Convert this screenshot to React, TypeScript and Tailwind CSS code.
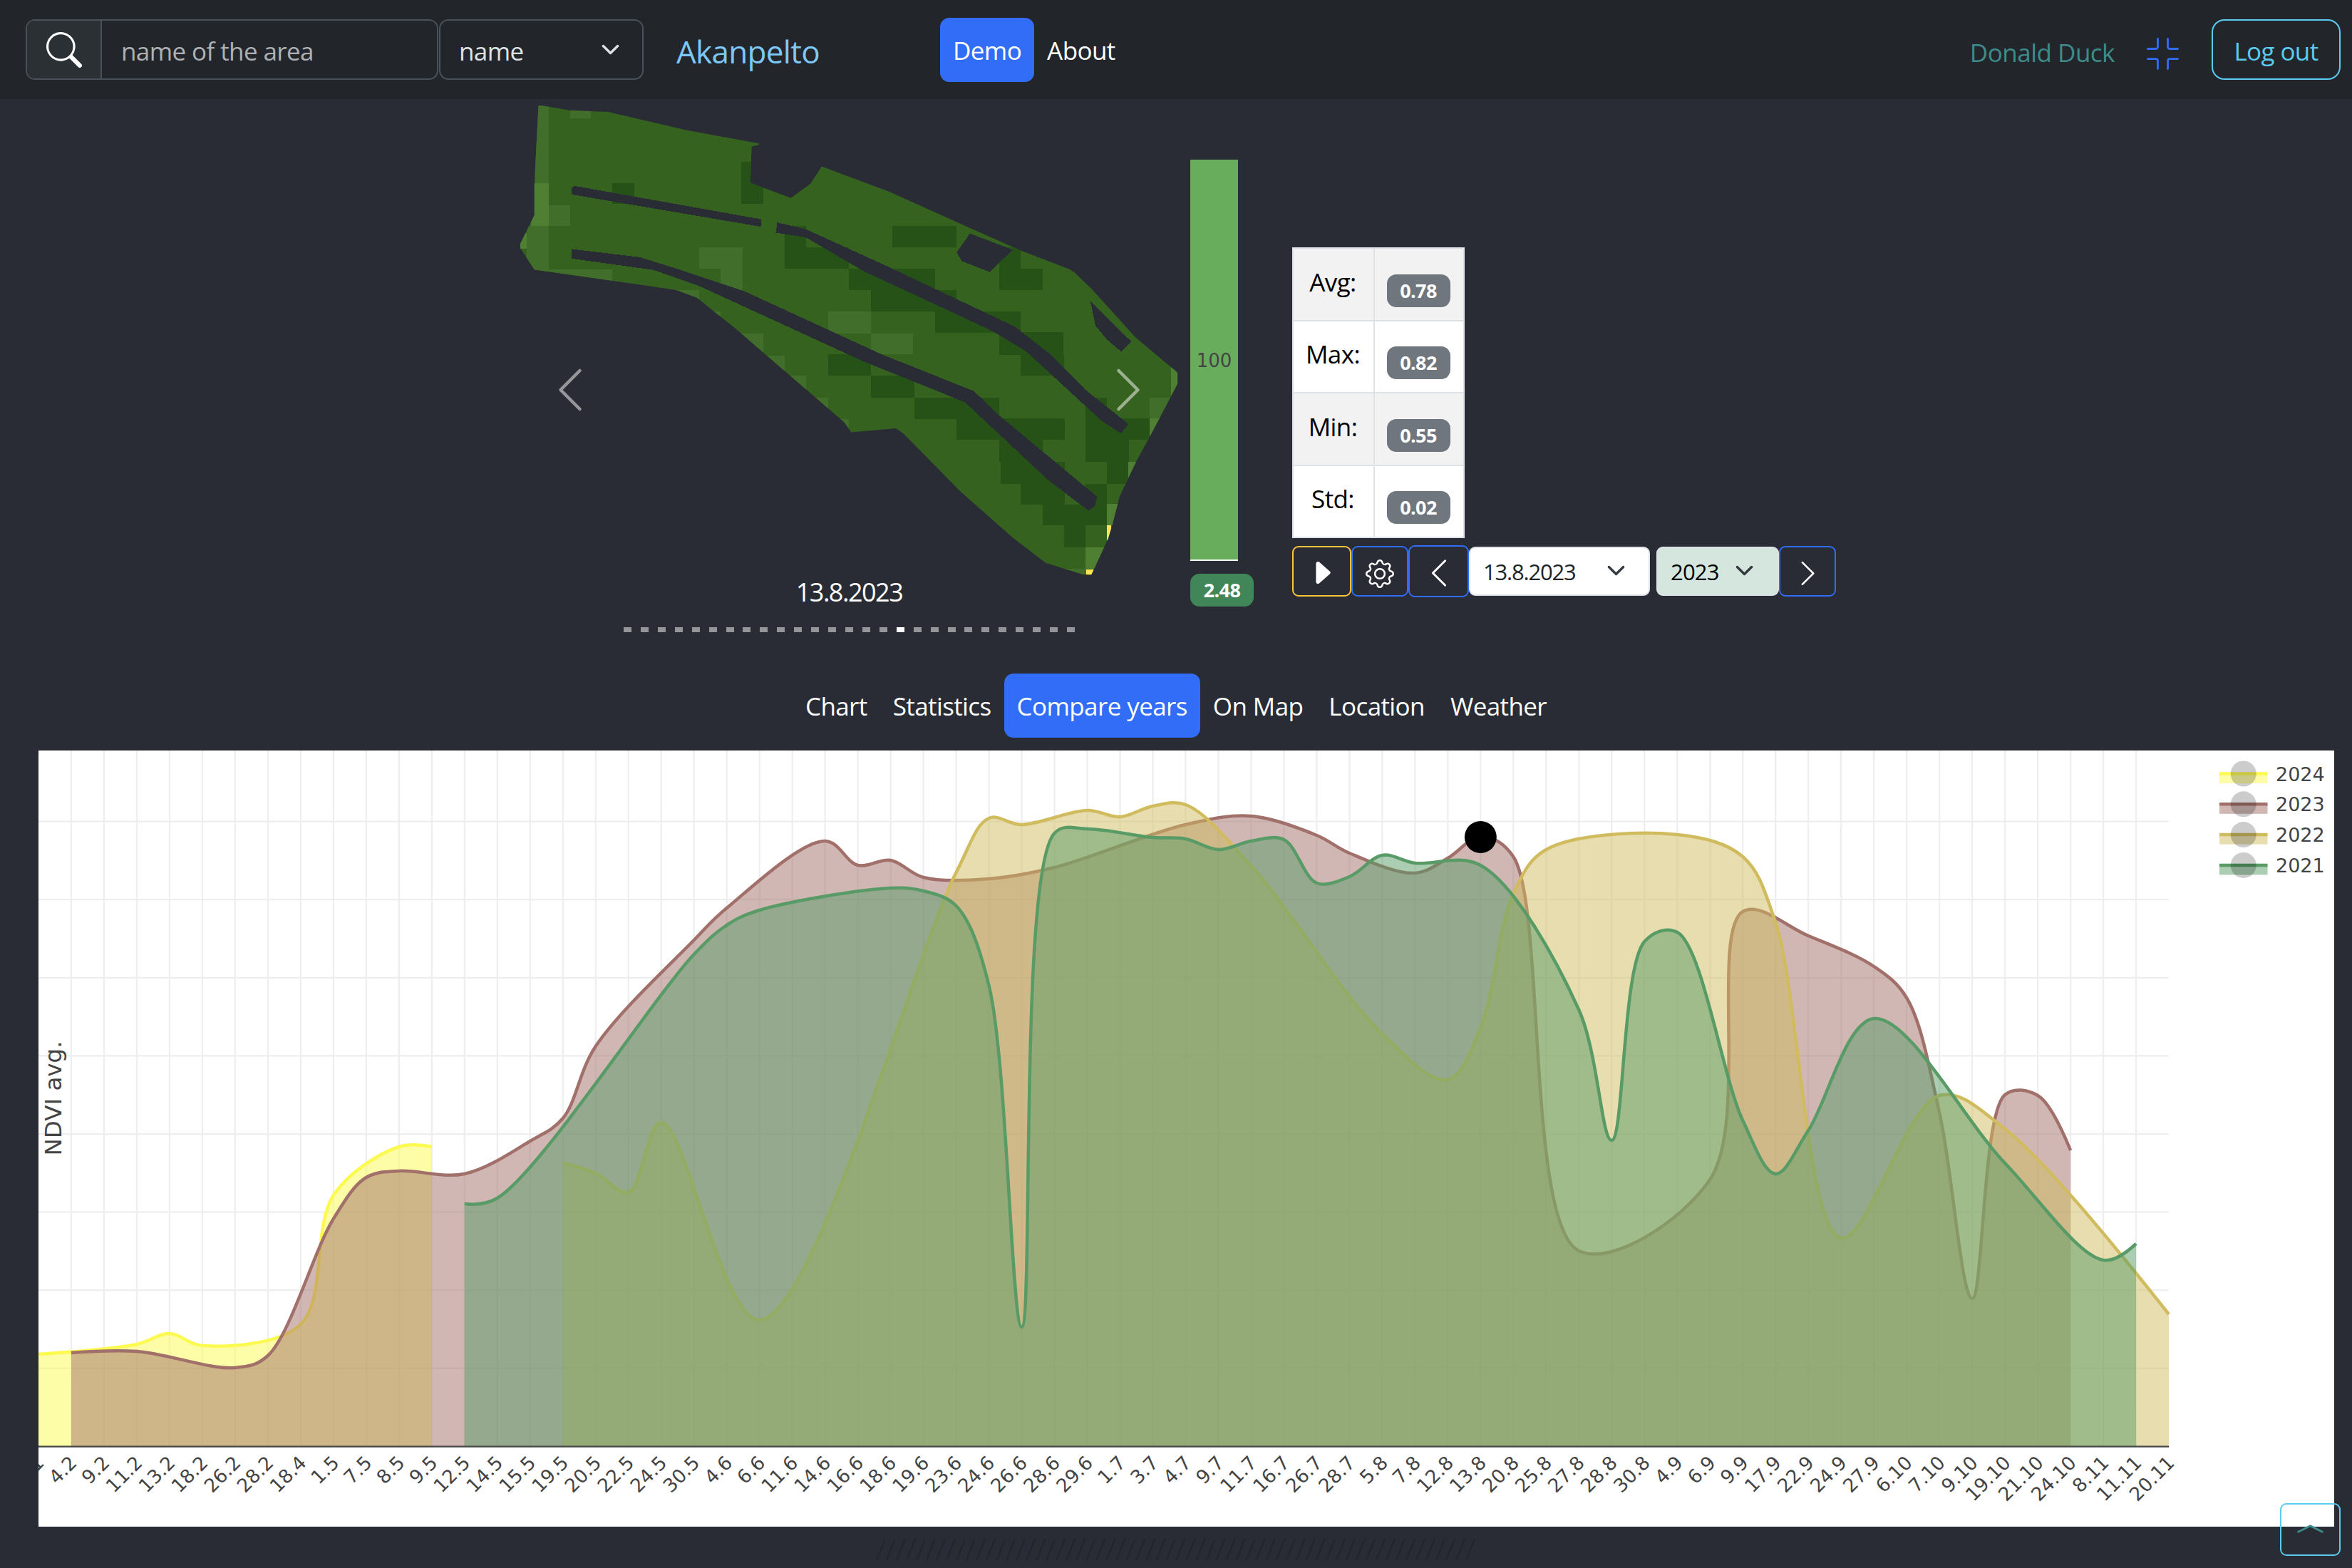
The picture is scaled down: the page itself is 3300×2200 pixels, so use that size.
import React from 'react';
import {
  BsCaretRightFill,
  BsChevronCompactUp,
  BsChevronLeft,
  BsChevronRight,
  BsFullscreenExit,
  BsGear,
  BsSearch,
} from 'react-icons/bs';

/* ---------- shared bits ---------- */

function Caret({ className = '' }: { className?: string }) {
  return (
    <svg viewBox="0 0 16 16" className={`size-[27px] ${className}`} fill="none">
      <path d="m2 5 6 6 6-6" stroke="currentColor" strokeWidth="2" strokeLinecap="round" strokeLinejoin="round" />
    </svg>
  );
}

function Tab({ label, active = false }: { label: string; active?: boolean }) {
  return (
    <a
      className={`flex h-[90px] items-center rounded-[13px] px-[18px] pt-[2px] text-white ${active ? 'bg-[#316df6]' : ''}`}
    >
      {label}
    </a>
  );
}

/* ---------- header ---------- */

function Header() {
  return (
    <header className="flex h-[139px] items-start bg-[#22262b] pl-[36px] pr-[16px]">
      <div className="mt-[27px] flex h-[85px] w-[579px] overflow-hidden rounded-[13px] border-[2px] border-[#495057]">
        <div className="flex w-[105px] items-center justify-center border-r-[2px] border-[#495057] bg-[#2b3035] text-white">
          <BsSearch className="size-[50px]" />
        </div>
        <div className="flex flex-1 items-center pl-[27px] pt-[4px] text-[#adb1b5]">name of the area</div>
      </div>
      <div className="ml-px mt-[27px] flex h-[85px] w-[287px] items-center justify-between rounded-[13px] border-[2px] border-[#495057] pl-[26px] pr-[31px] text-[#dee2e6]">
        <span className="pt-[4px]">name</span>
        <Caret />
      </div>
      <div className="ml-[46px] mt-[27px] flex h-[90px] w-[370px] items-center text-[44px] tracking-[-0.7px] text-[#7ec8f8]">Akanpelto</div>
      <nav className="mt-[25px] flex">
        <Tab label="Demo" active />
        <Tab label="About" />
      </nav>
      <div className="ml-auto mt-[27px] flex h-[85px] items-center">
        <span className="mt-[8px] tracking-[-0.5px] text-[#3d8b8b]">Donald Duck</span>
        <BsFullscreenExit className="ml-[45px] mt-[11px] size-[45px] text-[#316df6]" />
        <button className="ml-[46px] h-[85px] w-[181px] rounded-[18px] border-[2px] border-[#5bcbf0] pt-[4px] text-[#5bcbf0]">Log out</button>
      </div>
    </header>
  );
}

/* ---------- field raster ---------- */

const DARK = [
  [533, 195, 581, 314], [250, 256, 298, 314], [866, 376, 1007, 437], [1100, 437, 1148, 497], [1100, 497, 1196, 557],
  [629, 376, 676, 497], [676, 437, 770, 496], [770, 496, 960, 557], [818, 557, 1007, 618], [960, 618, 1148, 678],
  [1100, 676, 1242, 739], [1148, 739, 1243, 799], [724, 738, 818, 799], [818, 799, 914, 860], [914, 860, 1100, 921],
  [1007, 918, 1244, 979], [1100, 979, 1196, 1041], [1103, 1041, 1244, 1103], [1148, 1103, 1244, 1162],
  [1290, 1103, 1338, 1162], [1196, 1162, 1338, 1221], [1243, 1221, 1290, 1283], [1290, 860, 1338, 1041],
  [1338, 918, 1431, 979], [1338, 979, 1386, 1103],
];
const LIGHT = [
  [80, 30, 109, 256], [61, 376, 109, 510], [109, 318, 157, 376], [157, 45, 202, 73], [70, 499, 250, 557],
  [380, 557, 440, 590], [440, 437, 536, 497], [488, 497, 536, 557], [470, 618, 488, 630], [520, 679, 581, 739],
  [575, 741, 629, 799], [629, 799, 676, 860], [676, 860, 724, 920], [724, 921, 770, 970], [724, 618, 818, 679],
  [818, 679, 911, 738], [1431, 860, 1490, 918], [1240, 1343, 1292, 1362],
];
const PALE = [
  [70, 256, 109, 376], [40, 395, 61, 440], [1479, 770, 1500, 860], [1431, 918, 1460, 980], [1385, 1041, 1410, 1090],
  [1338, 1160, 1370, 1221], [1290, 1283, 1340, 1343],
];
const YELLOW = [[1338, 1221, 1346, 1262], [1292, 1345, 1310, 1362]];

const OUTLINE =
  '87,36 103,38 157,50 240,54 410,105 572,143 572,147 556,152 553,254 642,297 685,257 710,208 860,280 1040,384 1148,445 1255,498 1267,508 1305,555 1400,690 1493,790 1493,820 1440,950 1400,1045 1365,1140 1350,1215 1340,1258 1303,1360 1285,1359 1203,1327 1130,1255 1015,1125 890,962 873,947 775,958 760,930 520,665 435,578 390,557 340,547 78,499 47,438 47,426 78,345 78,255 84,110';
const GAPS = [
  '160,268 167,263 577,357 576,378 160,287',
  '612,366 675,385 860,493 1135,660 1215,740 1290,838 1385,935 1368,961 1325,925 1160,730 1085,672 800,502 675,408 609,395',
  '160,441 310,464 390,496 540,560 840,737 1045,842 1100,910 1316,1140 1310,1168 1296,1178 1210,1095 1025,873 800,757 440,545 340,500 160,468',
  '1036,397 1130,443 1080,506 1018,475 1007,450',
  '1301,588 1391,702 1369,731 1338,697 1312,657',
];

function Cells({ cells, fill }: { cells: number[][]; fill: string }) {
  return (
    <g fill={fill}>
      {cells.map(([a, b, c, d]) => (
        <rect key={`${a}-${b}`} x={a} y={b} width={c - a} height={d - b} />
      ))}
    </g>
  );
}

function FieldMap() {
  return (
    <svg viewBox="47 36 1447 1324" preserveAspectRatio="none" className="h-[658.5px] w-[923px]" shapeRendering="crispEdges">
      <clipPath id="field">
        <polygon points={OUTLINE} />
      </clipPath>
      <g clipPath="url(#field)">
        <rect width="1568" height="1568" fill="#36621f" />
        <Cells cells={DARK} fill="#265218" />
        <Cells cells={LIGHT} fill="#416f2b" />
        <Cells cells={PALE} fill="#4f7f33" />
        <Cells cells={YELLOW} fill="#ffe658" />
      </g>
      {GAPS.map((p) => (
        <polygon key={p} points={p} fill="#292c34" />
      ))}
    </svg>
  );
}

/* ---------- overview ---------- */

const STATS = [
  ['Avg:', '0.78'],
  ['Max:', '0.82'],
  ['Min:', '0.55'],
  ['Std:', '0.02'],
];

function Overview() {
  return (
    <section className="flex h-[806px] items-start">
      <div className="relative ml-[730px] mt-[9px] flex w-[923px] flex-col items-center">
        <FieldMap />
        <div className="mt-[-3px] text-[36px] leading-[54px] tracking-[-1.5px] text-white">13.8.2023</div>
        <div className="mt-[22px] flex w-[633px] justify-between">
          {Array.from({ length: 27 }, (_, i) => (
            <span key={i} className={`h-[7px] w-[11px] ${i === 16 ? 'bg-white' : 'bg-[#949599]'}`} />
          ))}
        </div>
        <BsChevronLeft className="absolute left-[34px] top-[363px] size-[72px] text-white/50" />
        <BsChevronRight className="absolute left-[817px] top-[363px] size-[72px] text-white/50" />
      </div>

      <div className="ml-[17px] mt-[85px] flex flex-col items-start">
        <div className="flex h-[563px] w-[67px] items-center justify-center border-b-[2px] border-white bg-[#68ad5c] pt-[3px] font-['DejaVu_Sans',sans-serif] text-[26px] tracking-normal text-[#444]">
          100
        </div>
        <div className="mt-[18px] flex h-[46px] w-[89px] items-center justify-center rounded-[13px] bg-[#418658] text-[27px] font-bold text-white">
          2.48
        </div>
      </div>

      <div className="ml-[54px] mt-[208px] flex flex-col items-start">
        <table className="h-[408px] w-[242px] border-collapse border-[2px] border-[#dee2e6]">
          <tbody>
            {STATS.map(([k, v]) => (
              <tr key={k} className="h-[101.5px] border-[2px] border-[#dee2e6] bg-white odd:bg-[#f2f2f2]">
                <td className="w-[114px] border-r-[2px] border-[#dee2e6] p-0 text-center align-middle text-black">
                  <span className="relative top-[-3px] right-[1px]">{k}</span>
                </td>
                <td className="p-0 pr-[2px]">
                  <div className="mx-auto mt-[18px] flex h-[46px] w-[89px] items-center justify-center rounded-[13px] bg-[#6f767e] text-[27px] font-bold text-white">
                    {v}
                  </div>
                </td>
              </tr>
            ))}
          </tbody>
        </table>
        <div className="mt-[10px] flex items-center text-white">
          <div className="flex h-[71px] w-[83px] items-center justify-center rounded-[9px] border-[2px] border-[#fdc43c]">
            <BsCaretRightFill className="mt-[3px] size-[43px]" />
          </div>
          <div className="flex h-[71px] w-[80px] items-center justify-center rounded-[9px] border-[2px] border-[#316df6]">
            <BsGear className="mt-[7px] size-[40px]" />
          </div>
          <div className="flex h-[73px] w-[85px] items-center justify-center rounded-[9px] border-[2px] border-[#316df6]">
            <BsChevronLeft className="mt-[5px] size-[46px]" />
          </div>
          <div className="flex h-[69px] w-[254px] items-center justify-between rounded-[9px] border-[2px] border-[#dee2e6] bg-white pl-[18px] pr-[32px] text-[31px] tracking-[-1.2px] text-[#212529]">
            13.8.2023
            <Caret className="mt-[-3px] text-[#343a40]" />
          </div>
          <div className="ml-[9px] flex h-[69px] w-[172px] items-center justify-between rounded-[9px] border-[2px] border-[#dee2e6] bg-[#d4e6de] pl-[18px] pr-[33px] text-[31px] tracking-[-0.8px] text-black">
            2023
            <Caret className="mt-[-3px] text-[#343a40]" />
          </div>
          <div className="flex h-[71px] w-[80px] items-center justify-center rounded-[9px] border-[2px] border-[#316df6]">
            <BsChevronRight className="mt-[5px] size-[41px]" />
          </div>
        </div>
      </div>
    </section>
  );
}

/* ---------- chart ---------- */

const LABELS =
  '1 4.2 9.2 11.2 13.2 18.2 26.2 28.2 18.4 1.5 7.5 8.5 9.5 12.5 14.5 15.5 19.5 20.5 22.5 24.5 30.5 4.6 6.6 11.6 14.6 16.6 18.6 19.6 23.6 24.6 26.6 28.6 29.6 1.7 3.7 4.7 9.7 11.7 16.7 26.7 28.7 5.8 7.8 12.8 13.8 20.8 25.8 27.8 28.8 30.8 4.9 6.9 9.9 17.9 22.9 24.9 27.9 6.10 7.10 9.10 19.10 21.10 24.10 8.11 11.11 20.11'.split(' ');

const STEP = 45.985;
const BASE = 976.5;

type Pt = [number, number];
type Series = { name: string; color: string; points: Pt[] };

/* each point: date index, distance from the top of the plot */
const SERIES: Series[] = [
  {
    name: '2024', color: '#fcf94f',
    points: [[0, 847], [3, 833], [4, 818], [5, 835], [8, 805], [9, 624], [11, 556], [12, 556]],
  },
  {
    name: '2023', color: '#a2706a',
    points: [
      [1, 845], [3, 843], [6, 866], [7, 849], [9, 657], [10, 599], [11, 590], [13, 594], [15, 548], [16, 516], [17, 415],
      [20, 266], [21, 221], [24, 127], [25, 161], [26, 154], [27, 178], [29, 180], [31, 164], [35, 104], [37, 92],
      [39, 119], [40, 144], [42, 172], [43, 151], [44, 121], [45, 149], [47, 702], [51, 602], [52, 226], [54, 260],
      [56, 303], [57, 347], [58, 508], [59, 769], [60, 483], [61, 484], [62, 561],
    ],
  },
  {
    name: '2022', color: '#d0bc5e',
    points: [
      [16, 579], [17, 593], [18, 620], [19, 522], [22, 799], [28, 171], [29, 95], [30, 104], [32, 84], [33, 93],
      [34, 78], [35, 76], [37, 162], [41, 398], [43, 462], [44, 389], [45, 201], [46, 139], [50, 118], [52, 149],
      [53, 241], [55, 684], [58, 484], [60, 531], [65, 791],
    ],
  },
  {
    name: '2021', color: '#589b66',
    points: [
      [13, 636], [14, 628], [20, 286], [21, 245], [22, 224], [26, 193], [27, 197], [28, 218], [29, 330], [30, 809],
      [31, 116], [32, 110], [34, 122], [35, 124], [36, 139], [37, 127], [38, 125], [39, 186], [40, 177], [41, 147],
      [42, 158], [44, 161], [47, 364], [48, 547], [49, 268], [50, 255], [52, 519], [53, 594], [54, 533], [56, 376],
      [60, 579], [63, 715], [64, 692],
    ],
  },
];

/* centripetal Catmull-Rom control points around one vertex */
function tangents(prev: Pt, cur: Pt, next: Pt): [Pt, Pt] {
  const d1x = prev[0] - cur[0];
  const d1y = prev[1] - cur[1];
  const d2x = next[0] - cur[0];
  const d2y = next[1] - cur[1];
  const a = Math.pow(d1x * d1x + d1y * d1y, 0.25);
  const b = Math.pow(d2x * d2x + d2y * d2y, 0.25);
  const nx = b * b * d1x - a * a * d2x;
  const ny = b * b * d1y - a * a * d2y;
  const p = 3 * b * (a + b);
  const q = 3 * a * (a + b);
  return [
    [cur[0] + nx / p, cur[1] + ny / p],
    [cur[0] - nx / q, cur[1] - ny / q],
  ];
}

function spline(pts: Pt[]) {
  const t = pts.slice(1, -1).map((p, i) => tangents(pts[i], p, pts[i + 2]));
  const f = (p: Pt) => `${p[0].toFixed(1)},${p[1].toFixed(1)}`;
  let d = `M${f(pts[0])}Q${f(t[0][0])} ${f(pts[1])}`;
  for (let i = 2; i < pts.length - 1; i++) d += `C${f(t[i - 2][1])} ${f(t[i - 1][0])} ${f(pts[i])}`;
  return `${d}Q${f(t[t.length - 1][1])} ${f(pts[pts.length - 1])}`;
}

function Chart() {
  const right = STEP * 65;
  return (
    <svg viewBox="0 0 3221 1089" className="h-[1089px] w-[3221px] bg-white font-['DejaVu_Sans',Verdana,sans-serif] tracking-normal">
      <g stroke="#eeeeee" strokeWidth="2.25">
        {LABELS.slice(1, -1).map((l, i) => (
          <line key={l} x1={(i + 1) * STEP} x2={(i + 1) * STEP} y1="0" y2={BASE} />
        ))}
        {Array.from({ length: 8 }, (_, k) => (
          <line key={k} x1="0" x2={right} y1={99.6 + 109.6 * k} y2={99.6 + 109.6 * k} />
        ))}
      </g>
      {SERIES.map((s) => {
        const pts = s.points.map(([i, y]): Pt => [i * STEP, y]);
        const d = spline(pts);
        return (
          <g key={s.name}>
            <path d={`${d}L${pts[pts.length - 1][0]},${BASE}L${pts[0][0]},${BASE}Z`} fill={s.color} fillOpacity="0.5" />
            <path d={d} fill="none" stroke={s.color} strokeWidth="4.5" />
          </g>
        );
      })}
      <circle cx={44 * STEP} cy="121.5" r="22.5" fill="#000" />
      <line x1="0" x2={right} y1={BASE} y2={BASE} stroke="#444" strokeWidth="2.25" />
      <g fontSize="26.5" fill="#444" textAnchor="end">
        {LABELS.map((l, i) => (
          <text key={l} transform={`translate(${i * STEP + 9.5},1001) rotate(-45)`}>{l}</text>
        ))}
      </g>
      <text transform="translate(32,488) rotate(-90)" fontSize="32.5" fill="#444" textAnchor="middle">NDVI avg.</text>
      {SERIES.map((s, i) => {
        const y = 32.5 + i * 42.8;
        return (
          <g key={s.name}>
            <rect x="3060" y={y} width="67.5" height="13.5" fill={s.color} fillOpacity="0.5" />
            <line x1="3060" x2="3127.5" y1={y} y2={y} stroke={s.color} strokeWidth="4.5" />
            <circle cx="3093.7" cy={y} r="18" fill="#000" fillOpacity="0.2" />
            <text x="3139" y={y + 10} fontSize="27" fill="#444">{s.name}</text>
          </g>
        );
      })}
    </svg>
  );
}

export default function App() {
  return (
    <div className="relative flex h-[2200px] w-[3300px] flex-col overflow-hidden bg-[#292c34] font-['Open_Sans','Noto_Sans',sans-serif] text-[35px] leading-[54px] tracking-[-0.6px]">
      <Header />
      <Overview />
      <nav className="flex justify-center">
        <Tab label="Chart" />
        <Tab label="Statistics" />
        <Tab label="Compare years" active />
        <Tab label="On Map" />
        <Tab label="Location" />
        <Tab label="Weather" />
      </nav>
      <div className="mt-[18px] pl-[54px]">
        <Chart />
      </div>
      <div className="mt-[17px] flex justify-center">
        <svg viewBox="0 0 842 30" className="h-[30px] w-[842px]" stroke="#22262b" strokeWidth="2.25">
          {Array.from({ length: 60 }, (_, i) => (
            <line key={i} x1={1 + i * 14.02} x2={13 + i * 14.02} y1="30" y2="0" />
          ))}
        </svg>
      </div>
      <button className="absolute bottom-[17px] right-[16px] flex h-[74px] w-[85px] items-center justify-center rounded-[9px] border-[2px] border-[#5bcbf0]">
        <BsChevronCompactUp className="size-[45px] text-[#3d8b8b]" />
      </button>
    </div>
  );
}
